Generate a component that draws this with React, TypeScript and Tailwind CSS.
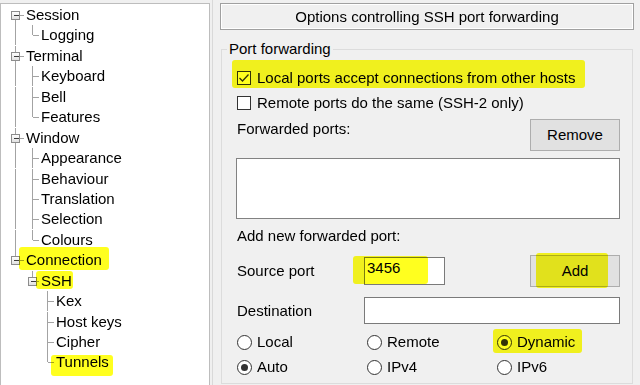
import React from 'react';

type Col = 'pipe' | 'none' | 'tee' | 'elbow' | 'first';

type TreeNode = {
  label: string;
  cols: Col[];
  box?: boolean;
  mark?: string;
};

// column centres and text starts for each tree level
const CX = [14, 31, 46];
const TX = [25, 40, 55];
const H = 20.44;
const MID = H / 2;

const tree: TreeNode[] = [
  { label: 'Session', cols: ['first'], box: true },
  { label: 'Logging', cols: ['pipe', 'elbow'] },
  { label: 'Terminal', cols: ['tee'], box: true },
  { label: 'Keyboard', cols: ['pipe', 'tee'] },
  { label: 'Bell', cols: ['pipe', 'tee'] },
  { label: 'Features', cols: ['pipe', 'elbow'] },
  { label: 'Window', cols: ['tee'], box: true },
  { label: 'Appearance', cols: ['pipe', 'tee'] },
  { label: 'Behaviour', cols: ['pipe', 'tee'] },
  { label: 'Translation', cols: ['pipe', 'tee'] },
  { label: 'Selection', cols: ['pipe', 'tee'] },
  { label: 'Colours', cols: ['pipe', 'elbow'] },
  { label: 'Connection', cols: ['elbow'], box: true, mark: 'left-[-7px] top-[-3px] w-[90px] h-[23px]' },
  { label: 'SSH', cols: ['none', 'elbow'], box: true, mark: 'left-[-5px] top-[0px] w-[37px] h-[18px]' },
  { label: 'Kex', cols: ['none', 'none', 'tee'] },
  { label: 'Host keys', cols: ['none', 'none', 'tee'] },
  { label: 'Cipher', cols: ['none', 'none', 'tee'] },
  { label: 'Tunnels', cols: ['none', 'none', 'elbow'], mark: 'left-[-5px] top-[3px] w-[62px] h-[21px]' },
];

const LINE = '#a3a3a3';

function TreeLines({ node }: { node: TreeNode }) {
  const level = node.cols.length - 1;
  const w = TX[level] - 1;
  const parts: React.ReactNode[] = [];
  node.cols.forEach((c, i) => {
    const x = CX[i] + 0.5;
    const own = i === level;
    const gapTop = own && node.box ? MID - 4 : MID;
    const gapBot = own && node.box ? MID + 4 : MID;
    if (c === 'pipe') parts.push(<line key={`p${i}`} x1={x} x2={x} y1={0} y2={H} stroke={LINE} />);
    if (c === 'tee' || c === 'elbow') parts.push(<line key={`t${i}`} x1={x} x2={x} y1={0} y2={gapTop} stroke={LINE} />);
    if (c === 'tee' || c === 'first') parts.push(<line key={`b${i}`} x1={x} x2={x} y1={gapBot} y2={H} stroke={LINE} />);
    if (own) {
      parts.push(
        <line key={`h${i}`} x1={node.box ? x + 4 : x} x2={TX[i] - 2} y1={MID + 0.5} y2={MID + 0.5} stroke={LINE} />
      );
      if (node.box) {
        parts.push(
          <g key={`x${i}`}>
            <rect x={x - 4} y={MID - 3.5} width={8} height={8} fill="url(#bx)" stroke="#8c8c8c" />
            <line x1={x - 2} x2={x + 3} y1={MID + 0.5} y2={MID + 0.5} stroke="#3c3c3c" />
          </g>
        );
      }
    }
  });
  return (
    <svg width={w} height={H} className="shrink-0" shapeRendering="crispEdges">
      <defs>
        <linearGradient id="bx" x1="0" y1="0" x2="0" y2="1">
          <stop offset="0" stopColor="#ffffff" />
          <stop offset="1" stopColor="#dedede" />
        </linearGradient>
      </defs>
      {parts}
    </svg>
  );
}

function Check({ checked }: { checked?: boolean }) {
  return (
    <span className="flex h-[14px] w-[14px] shrink-0 items-center justify-center border border-[#333] bg-white">
      {checked && (
        <svg width="12" height="12" viewBox="0 0 12 12">
          <polyline points="1.5,6 4.5,9 10.5,2.5" fill="none" stroke="#333" strokeWidth="1.3" />
        </svg>
      )}
    </span>
  );
}

function Radio({ checked }: { checked?: boolean }) {
  return (
    <span className="flex h-[15px] w-[15px] shrink-0 items-center justify-center rounded-full border border-[#333] bg-white">
      {checked && <span className="h-[7px] w-[7px] rounded-full bg-[#333]" />}
    </span>
  );
}

function Mark({ className }: { className: string }) {
  return <span className={`pointer-events-none absolute rounded-[3px] bg-[#ffff1f] mix-blend-multiply ${className}`} />;
}

function RadioItem({ label, checked, mark }: { label: string; checked?: boolean; mark?: string }) {
  return (
    <div className="relative flex items-center gap-[5px]">
      <Radio checked={checked} />
      <span>{label}</span>
      {mark && <Mark className={mark} />}
    </div>
  );
}

const btn = 'relative flex h-[32px] w-[90px] items-center justify-center border border-[#adadad] bg-[#e1e1e1]';

export default function App() {
  return (
    <div className="flex h-[385px] w-[640px] overflow-hidden bg-[#f0f0f0] font-['Liberation_Sans',Arial,sans-serif] text-[15px] text-black">
      {/* tree */}
      <div className="mt-[3px] w-[210px] shrink-0 border-t border-r border-l border-[#bdbdbd] bg-white pt-[1px] leading-[20.44px]">
        {tree.map((n) => (
          <div key={n.label} className="flex h-[20.44px] items-center">
            <TreeLines node={n} />
            <span className="relative ml-px whitespace-nowrap">
              {n.label}
              {n.mark && <Mark className={n.mark} />}
            </span>
          </div>
        ))}
      </div>

      {/* options */}
      <div className="ml-[2px] flex flex-1 flex-col border-l border-[#d9d9d9] pt-[3px] pr-[6px] pl-[7px]">
        <div className="flex h-[27px] items-center justify-center border border-[#a0a0a0] pt-[2px] shadow-[inset_1px_1px_0_#fff,inset_-1px_-1px_0_#fff]">
          Options controlling SSH port forwarding
        </div>

        <div className="relative mx-[1px] mt-[19px] flex h-[335px] flex-col border border-[#dcdcdc] pr-[12px] pl-[15px] leading-[20px]">
          <span className="absolute top-[-11px] left-[5px] bg-[#f0f0f0] px-[2px]">Port forwarding</span>

          <div className="relative mt-[15px] flex h-[25px] items-center gap-[6px]">
            <Check checked />
            <span>Local ports accept connections from other hosts</span>
            <Mark className="left-[-5px] top-[-5px] h-[28px] w-[353px]" />
          </div>
          <div className="flex h-[25px] items-center gap-[6px]">
            <Check />
            <span>Remote ports do the same (SSH-2 only)</span>
          </div>

          <div className="mt-[4px] flex h-[32px] items-start justify-between">
            <span>Forwarded ports:</span>
            <div className={btn}>Remove</div>
          </div>

          <div className="mt-[7px] -ml-px h-[61px] border border-[#828282] bg-white" />

          <div className="mt-[7px]">Add new forwarded port:</div>

          <div className="mt-[9px] flex h-[32px] items-center">
            <span className="w-[127px]">Source port</span>
            <div className="relative h-[28px] w-[81px] border border-[#7a7a7a] bg-white pt-[1px] pl-[2px] leading-[17px]">
              3456
              <Mark className="left-[-12px] top-[-2px] h-[28px] w-[75px]" />
            </div>
            <div className={`ml-auto ${btn}`}>
              Add
              <Mark className="left-[5px] top-[-3px] h-[35px] w-[72px]" />
            </div>
          </div>

          <div className="mt-[10px] flex h-[27px] items-center">
            <span className="w-[127px]">Destination</span>
            <div className="h-[27px] flex-1 border border-[#7a7a7a] bg-white" />
          </div>

          <div className="mt-[8px] grid h-[20px] grid-cols-[130px_130px_1fr] items-center">
            <RadioItem label="Local" />
            <RadioItem label="Remote" />
            <RadioItem label="Dynamic" checked mark="left-[-4px] top-[-3px] h-[24px] w-[89px]" />
          </div>
          <div className="mt-[5px] grid h-[20px] grid-cols-[130px_130px_1fr] items-center">
            <RadioItem label="Auto" checked />
            <RadioItem label="IPv4" />
            <RadioItem label="IPv6" />
          </div>
        </div>
      </div>
    </div>
  );
}
